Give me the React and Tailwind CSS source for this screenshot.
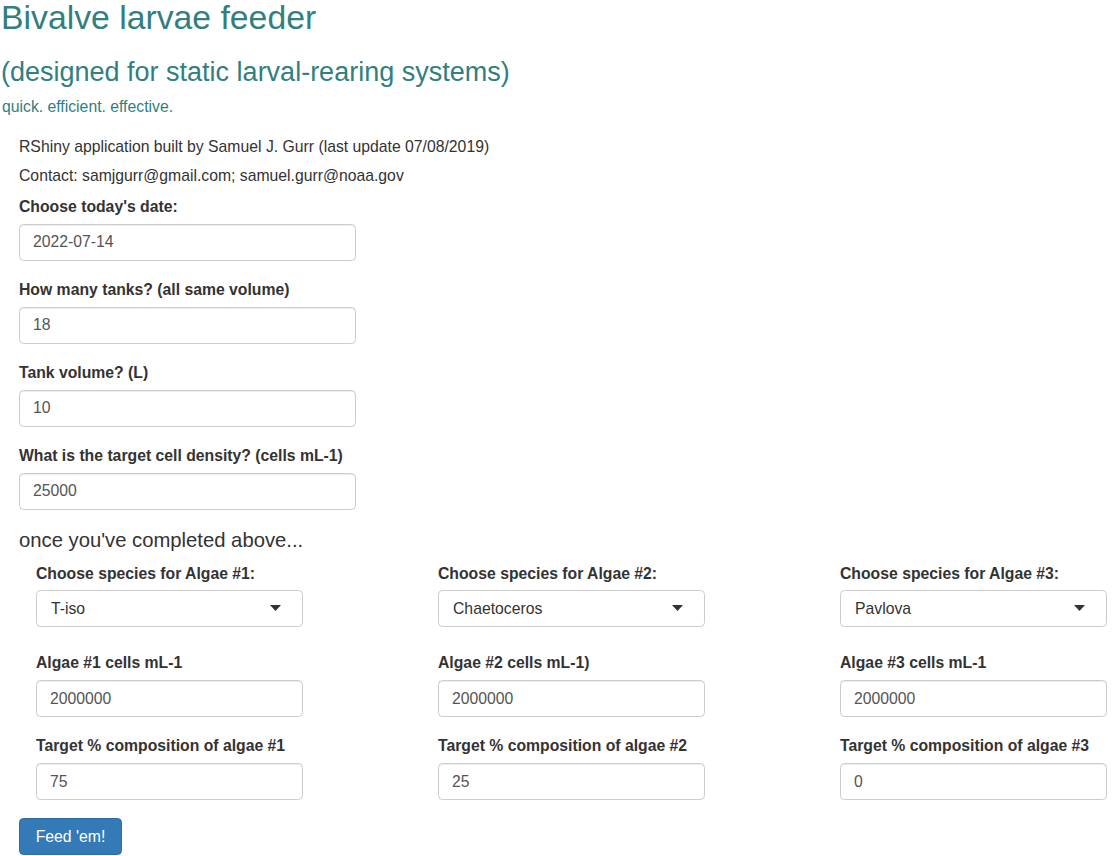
import React from "react";

const FONT = { fontFamily: '"Liberation Sans", Arial, Helvetica, sans-serif' };

function Label({ children, className = "" }) {
  return (
    <div className={"font-bold text-[15.75px] leading-[22.5px] text-[#333] whitespace-nowrap " + className}>
      {children}
    </div>
  );
}

function TextInput({ value, className = "" }) {
  return (
    <div
      className={
        "h-[37px] rounded-[4.5px] border border-[#ccc] bg-white px-[13px] flex items-center text-[15.75px] text-[#555] shadow-[inset_0_1px_1px_rgba(0,0,0,0.075)] " +
        className
      }
    >
      {value}
    </div>
  );
}

function SelectBox({ value, className = "" }) {
  return (
    <div
      className={
        "h-[37px] rounded-[4.5px] border border-[#ccc] bg-white pl-[14px] pr-[21px] flex items-center justify-between text-[15.75px] text-[#333] " +
        className
      }
    >
      <span>{value}</span>
      <svg width="11" height="6" viewBox="0 0 11 6" className="mb-[1px]">
        <polygon points="0,0 11,0 5.5,6" fill="#333" />
      </svg>
    </div>
  );
}

function Column({ n, species, pct }) {
  return (
    <div className="pl-[17px]">
      <Label className="mt-[11px]">{"Choose species for Algae #" + n + ":"}</Label>
      <SelectBox value={species} className="mt-[5px] w-[267px]" />
      <Label className="mt-[25px]">{n === 2 ? "Algae #2 cells mL-1)" : "Algae #" + n + " cells mL-1"}</Label>
      <TextInput value="2000000" className="mt-[5.5px] w-[267px]" />
      <Label className="mt-[18px]">{"Target % composition of algae #" + n}</Label>
      <TextInput value={pct} className="mt-[5.5px] w-[267px]" />
    </div>
  );
}

export default function App() {
  return (
    <div className="w-[1114px] h-[856px] overflow-hidden bg-white text-[#333]" style={FONT}>
      <div className="pl-[1px]">
        <h2 className="text-[33.75px] leading-[35px] text-[#317f7f] font-normal whitespace-nowrap">
          Bivalve larvae feeder
        </h2>
        <h3 className="text-[27px] leading-[29.7px] mt-[23px] text-[#317f7f] font-normal whitespace-nowrap">
          (designed for static larval-rearing systems)
        </h3>
        <h5 className="text-[15.75px] leading-[17.3px] mt-[10px] pl-[1px] text-[#317f7f] font-normal">
          quick. efficient. effective.
        </h5>
      </div>

      <div className="pl-[19px]">
        <p className="text-[15.75px] leading-[22.5px] mt-[20.7px]">
          RShiny application built by Samuel J. Gurr (last update 07/08/2019)
        </p>
        <p className="text-[15.75px] leading-[22.5px] mt-[6.5px]">
          Contact: samjgurr@gmail.com; samuel.gurr@noaa.gov
        </p>

        <Label className="mt-[8.5px]">Choose today's date:</Label>
        <TextInput value="2022-07-14" className="mt-[5.5px] w-[337px]" />

        <Label className="mt-[18px]">How many tanks? (all same volume)</Label>
        <TextInput value="18" className="mt-[5.5px] w-[337px]" />

        <Label className="mt-[18px]">Tank volume? (L)</Label>
        <TextInput value="10" className="mt-[5.5px] w-[337px]" />

        <Label className="mt-[18px]">What is the target cell density? (cells mL-1)</Label>
        <TextInput value="25000" className="mt-[5.5px] w-[337px]" />

        <h4 className="text-[20.25px] leading-[22.3px] mt-[19.8px] font-normal">
          once you've completed above...
        </h4>

        <div className="grid grid-cols-[402px_402px_402px]">
          <Column n={1} species="T-iso" pct="75" />
          <Column n={2} species="Chaetoceros" pct="25" />
          <Column n={3} species="Pavlova" pct="0" />
        </div>

        <button className="mt-[18px] h-[37px] w-[103px] rounded-[4.5px] border border-[#2e6da4] bg-[#337ab7] text-white text-[15.75px] flex items-center justify-center">
          Feed 'em!
        </button>
      </div>
    </div>
  );
}
